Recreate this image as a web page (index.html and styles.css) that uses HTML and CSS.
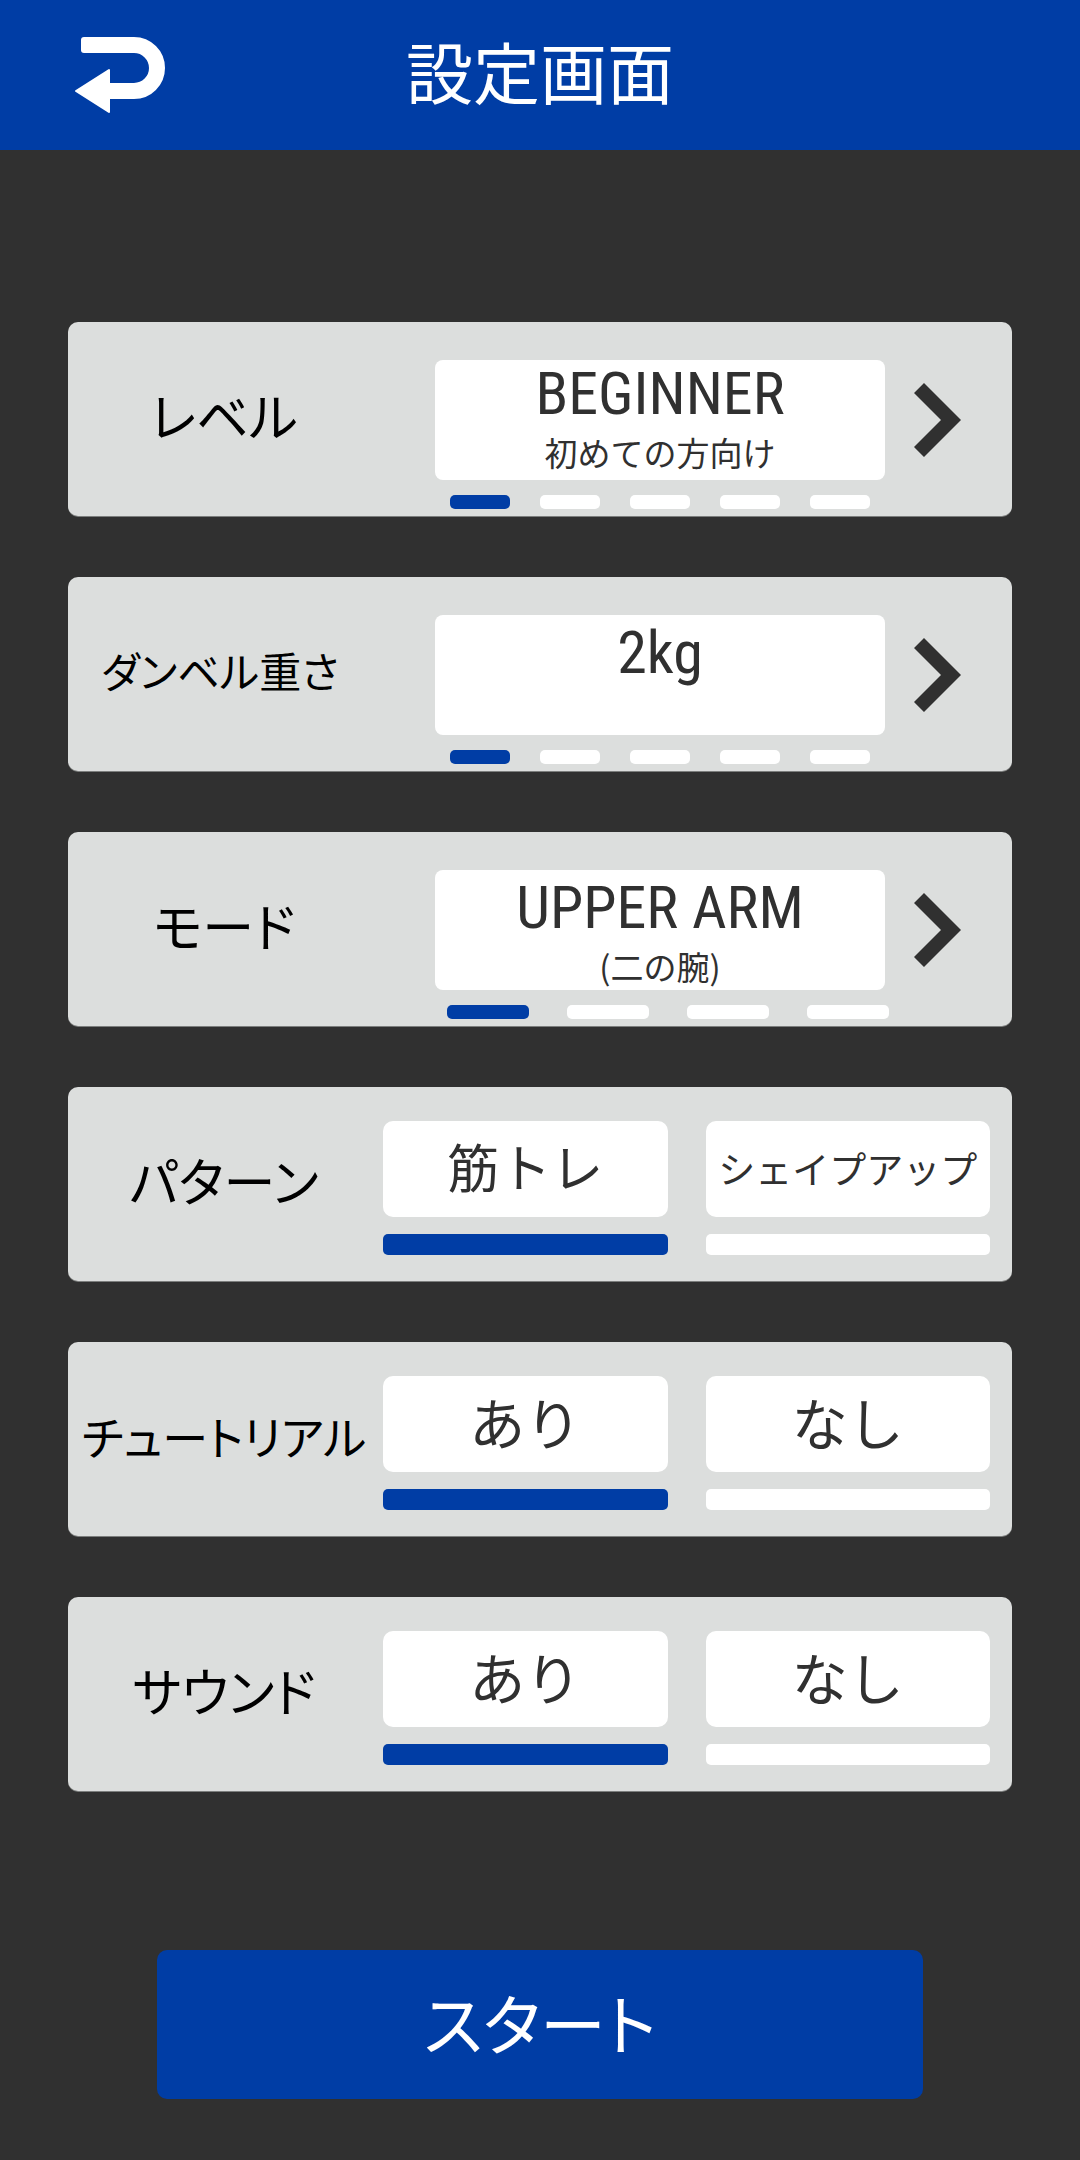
FILE: index.html
```
<!DOCTYPE html>
<html lang="ja">
<head>
    <meta charset="UTF-8">
    <meta name="viewport" content="width=device-width, initial-scale=1.0">
    <title>設定画面</title>
    <link rel="stylesheet" href="styles.css">
</head>
<body>
    <header class="header">
        <a href="#" class="back" aria-label="戻る">
            <svg width="92" height="78" viewBox="0 0 92 78">
                <path d="M9 9H59A23 23 0 0 1 59 55H32" fill="none" stroke="#fff" stroke-width="16"/>
                <path d="M9 1H20V17H9Q6 17 6 14V4Q6 1 9 1Z" fill="#fff"/>
                <path d="M1 55L34 34V76Z" fill="#fff" stroke="#fff" stroke-width="2" stroke-linejoin="round"/>
            </svg>
        </a>
        <h1>設定画面</h1>
    </header>

    <form class="settings">
        <!-- レベル -->
        <section class="card">
            <h2 class="name">レベル</h2>
            <div class="selector">
                <div class="current">
                    <div class="value">
                        <span class="main">BEGINNER</span>
                        <span class="sub">初めての方向け</span>
                    </div>
                    <div class="steps">
                        <span class="on"></span><span></span><span></span><span></span><span></span>
                    </div>
                </div>
                <button type="button" class="next" aria-label="次のレベル">
                    <svg width="47" height="74" viewBox="0 0 47 74"><path d="M10 0L47 37L10 74L0 64L27 37L0 10Z"/></svg>
                </button>
            </div>
        </section>

        <!-- ダンベル重さ -->
        <section class="card">
            <h2 class="name small">ダンベル重さ</h2>
            <div class="selector">
                <div class="current">
                    <div class="value lower">
                        <span class="main">2kg</span>
                    </div>
                    <div class="steps">
                        <span class="on"></span><span></span><span></span><span></span><span></span>
                    </div>
                </div>
                <button type="button" class="next" aria-label="次の重さ">
                    <svg width="47" height="74" viewBox="0 0 47 74"><path d="M10 0L47 37L10 74L0 64L27 37L0 10Z"/></svg>
                </button>
            </div>
        </section>

        <!-- モード -->
        <section class="card">
            <h2 class="name">モード</h2>
            <div class="selector">
                <div class="current">
                    <div class="value lower">
                        <span class="main">UPPER ARM</span>
                        <span class="sub">(二の腕)</span>
                    </div>
                    <div class="steps four">
                        <span class="on"></span><span></span><span></span><span></span>
                    </div>
                </div>
                <button type="button" class="next" aria-label="次のモード">
                    <svg width="47" height="74" viewBox="0 0 47 74"><path d="M10 0L47 37L10 74L0 64L27 37L0 10Z"/></svg>
                </button>
            </div>
        </section>

        <!-- パターン -->
        <section class="card">
            <h2 class="name">パターン</h2>
            <div class="options">
                <label class="option">
                    <span class="box medium">筋トレ</span>
                    <input type="radio" name="pattern" value="training" checked>
                </label>
                <label class="option">
                    <span class="box long">シェイプアップ</span>
                    <input type="radio" name="pattern" value="shapeup">
                </label>
            </div>
        </section>

        <!-- チュートリアル -->
        <section class="card">
            <h2 class="name wide">チュートリアル</h2>
            <div class="options">
                <label class="option">
                    <span class="box">あり</span>
                    <input type="radio" name="tutorial" value="on" checked>
                </label>
                <label class="option">
                    <span class="box">なし</span>
                    <input type="radio" name="tutorial" value="off">
                </label>
            </div>
        </section>

        <!-- サウンド -->
        <section class="card">
            <h2 class="name">サウンド</h2>
            <div class="options">
                <label class="option">
                    <span class="box">あり</span>
                    <input type="radio" name="sound" value="on" checked>
                </label>
                <label class="option">
                    <span class="box">なし</span>
                    <input type="radio" name="sound" value="off">
                </label>
            </div>
        </section>

        <button type="button" class="start">スタート</button>
    </form>
</body>
</html>
```
FILE: styles.css
```
* {
    box-sizing: border-box;
}

body {
    margin: 0;
    font-family: "Noto Sans CJK JP", sans-serif;
    background-color: #303030;
    color: #303030;
}

h1, h2 {
    margin: 0;
    font-weight: normal;
}

button {
    padding: 0;
    border: none;
    font-family: inherit;
    cursor: pointer;
}

svg {
    display: block;
}

.header {
    display: grid;
    grid-template-columns: 1fr auto 1fr;
    align-items: center;
    height: 150px;
    padding: 0 75px;
    background-color: #003da5;
    color: #fff;
}

.header h1 {
    padding-bottom: 10px;
    font-size: 67px;
    line-height: 96px;
}

.back {
    justify-self: start;
}

.settings {
    display: flex;
    flex-direction: column;
    gap: 61px;
    padding: 172px 68px 61px;
}

.card {
    display: grid;
    grid-template-columns: 304px 1fr;
    height: 194px;
    background-color: #dcdedd;
    border-radius: 10px;
    box-shadow: 0 1px 0 #7c7e7d;
}

.name {
    align-self: center;
    padding: 0 0 8px 8px;
    text-align: center;
    font-size: 52px;
    font-feature-settings: "palt";
    line-height: 72px;
    color: #000;
    white-space: nowrap;
}

.name.small {
    padding-left: 0;
    font-size: 42px;
}

.name.wide {
    font-size: 46px;
}

/* 矢印で切り替える項目 */
.selector {
    display: flex;
    align-items: center;
    gap: 29px;
    padding: 2px 51px 0 63px;
}

.current {
    flex: 1;
    align-self: flex-start;
    padding-top: 36px;
}

.value {
    display: flex;
    flex-direction: column;
    align-items: center;
    height: 120px;
    background-color: #fff;
    border-radius: 8px;
}

.value.lower {
    padding-top: 4px;
}

.main {
    font-family: "Roboto Condensed", "Liberation Sans Narrow", Roboto, sans-serif;
    font-size: 60px;
    line-height: 68px;
}

.sub {
    font-size: 33px;
    line-height: 48px;
}

.steps {
    display: flex;
    gap: 30px;
    padding: 0 15px;
    margin-top: 15px;
}

.steps span {
    flex: 1;
    height: 14px;
    border-radius: 5px;
    background-color: #fff;
}

.steps.four {
    gap: 38px;
    padding: 0 0 0 12px;
    margin-right: -4px;
}

.steps .on {
    background-color: #003da5;
}

.next {
    background: none;
}

.next path {
    fill: #303030;
}

/* 二択の項目 */
.options {
    display: flex;
    gap: 38px;
    padding: 34px 22px 0 11px;
}

.option {
    flex: 1;
    cursor: pointer;
}

.box {
    display: block;
    height: 96px;
    background-color: #fff;
    border-radius: 10px;
    text-align: center;
    font-size: 56px;
    line-height: 90px;
    white-space: nowrap;
}

.box.medium {
    font-size: 52px;
}

.box.long {
    font-size: 37px;
    line-height: 94px;
}

.option input {
    display: block;
    appearance: none;
    width: 100%;
    height: 21px;
    margin: 17px 0 0;
    background-color: #fff;
    border-radius: 5px;
    cursor: pointer;
}

.option input:checked {
    background-color: #003da5;
}

.start {
    height: 149px;
    margin: 98px 89px 0;
    padding-bottom: 8px;
    background-color: #003da5;
    border-radius: 10px;
    color: #fff;
    font-size: 66px;
    font-feature-settings: "palt";
}
```
